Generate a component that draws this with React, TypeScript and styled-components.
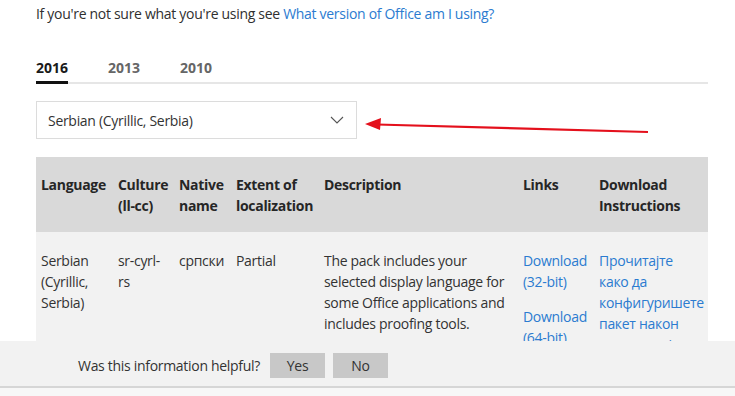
import React from 'react'
import styled, { createGlobalStyle } from 'styled-components'

const GlobalStyle = createGlobalStyle`
  html, body { margin: 0; padding: 0; background: #fff; }
  body {
    font-family: "Segoe UI", "Open Sans", "Noto Sans", sans-serif;
    color: #2f2f2f;
    letter-spacing: -0.3px;
    overflow: hidden;
  }
`

const columns = [ 'Language', 'Culture (ll-cc)', 'Native name', 'Extent of localization', 'Description', 'Links', 'Download Instructions' ]

const App = () => {
  return (
    <Page>
      <GlobalStyle/>
      <Intro>
        If you're not sure what you're using see <Link href='#'>What version of Office am I using?</Link>
      </Intro>
      <Tabs>
        <Tab active>2016</Tab>
        <Tab>2013</Tab>
        <Tab>2010</Tab>
      </Tabs>
      <SelectRow>
        <Select>
          <span>Serbian (Cyrillic, Serbia)</span>
          <svg width='14' height='8' viewBox='0 0 14 8'>
            <path d='M1 1 L7 7 L13 1' fill='none' stroke='#555' strokeWidth='1.1'/>
          </svg>
        </Select>
        <Arrow width='300' height='30' viewBox='0 0 300 30'>
          <path d='M14 15.5 L285 23' stroke='#e4101c' strokeWidth='2.2' fill='none'/>
          <path d='M2 15 L18 9 L17 21 Z' fill='#e4101c'/>
        </Arrow>
      </SelectRow>
      <Table>
        <HeadRow>
          {columns.map( c => <HeadCell key={c}>{c}</HeadCell> )}
        </HeadRow>
        <BodyRow>
          <Cell>Serbian (Cyrillic, Serbia)</Cell>
          <Cell>sr-cyrl-rs</Cell>
          <Cell>српски</Cell>
          <Cell>Partial</Cell>
          <Cell>The pack includes your selected display language for some Office applications and includes proofing tools.</Cell>
          <Cell>
            <Link href='#'>Download (32-bit)</Link>
            <Gap/>
            <Link href='#'>Download (64-bit)</Link>
          </Cell>
          <Cell>
            <Link href='#'>Прочитајте како да конфигуришете пакет након инсталације</Link>
          </Cell>
        </BodyRow>
      </Table>
      <Feedback>
        <span>Was this information helpful?</span>
        <FeedbackButton>Yes</FeedbackButton>
        <FeedbackButton>No</FeedbackButton>
      </Feedback>
    </Page>
  )
}

const Page = styled.div`
  padding: 3px 27px 0 36px;
  height: 396px;
  box-sizing: border-box;
`

const Intro = styled.p`
  margin: 0;
  font-size: 14px;
  line-height: 22px;
`

const Link = styled.a`
  color: #2b7bd0;
  text-decoration: none;
`

const Tabs = styled.div`
  display: flex;
  margin-top: 33px;
  border-bottom: 2px solid #e6e6e6;
`

const Tab = styled.div<{ active?: boolean }>`
  font-size: 14px;
  font-weight: 700;
  line-height: 20px;
  letter-spacing: 0;
  color: ${p => p.active ? '#1a1a1a' : '#666'};
  padding-bottom: 3px;
  margin-right: 40px;
  border-bottom: 3px solid ${p => p.active ? '#111' : 'transparent'};
  margin-bottom: -2px;
`

const SelectRow = styled.div`
  display: flex;
  align-items: center;
  margin-top: 17px;
  height: 38px;
  position: relative;
`

const Select = styled.div`
  width: 321px;
  height: 38px;
  box-sizing: border-box;
  border: 1px solid #dcdcdc;
  display: flex;
  align-items: center;
  justify-content: space-between;
  padding: 0 12px 0 11px;
  font-size: 14px;
  color: #333;
`

const Arrow = styled.svg`
  position: absolute;
  left: 327px;
  top: 8px;
`

const Table = styled.div`
  margin-top: 18px;
  width: 672px;
`

const Grid = styled.div`
  display: grid;
  grid-template-columns: 77px 61px 57px 88px 199px 76px 114px;
`

const HeadRow = styled( Grid )`
  background: #d9d9d9;
  height: 75px;
  box-sizing: border-box;
  padding-top: 17px;
`

const HeadCell = styled.div`
  font-size: 14px;
  font-weight: 700;
  line-height: 21px;
  color: #262626;
  padding: 0 5px;
`

const BodyRow = styled( Grid )`
  background: #f2f2f2;
  padding-top: 18px;
  height: 160px;
  box-sizing: border-box;
`

const Cell = styled.div`
  font-size: 14px;
  line-height: 21px;
  color: #333;
  padding: 0 5px;
`

const Gap = styled.div`
  height: 14px;
`

const Feedback = styled.div`
  position: fixed;
  left: 0;
  right: 0;
  bottom: 0;
  height: 55px;
  box-sizing: border-box;
  background: #f2f2f2;
  border-bottom: 8px solid #f7f7f7;
  box-shadow: inset 0 -2px 0 #d6d6d6;
  display: flex;
  align-items: center;
  padding: 2px 0 0 78px;
  font-size: 14px;
  color: #333;
  span { margin-right: 10px; }
`

const FeedbackButton = styled.button`
  width: 55px;
  height: 25px;
  margin-right: 8px;
  border: none;
  background: #c8c8c8;
  font-family: inherit;
  font-size: 14px;
  letter-spacing: inherit;
  color: #333;
  padding: 0;
`

export default App
